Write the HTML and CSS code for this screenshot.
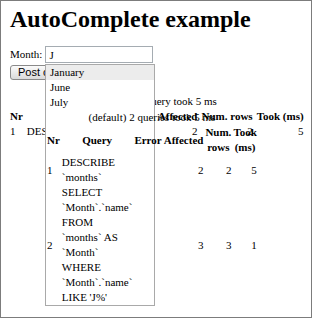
FILE: index.html
```html
<!DOCTYPE html>
<html lang="en">
    <head>
        <meta charset="UTF-8" />
        <meta name="viewport" content="width=device-width, initial-scale=1.0" />
        <title>AutoComplete example</title>
        <link rel="stylesheet" href="styles.css">
    </head>
    <body>
        <div class="page">
            <h1>AutoComplete example</h1>
            <form name="months">
                <div class="field">
                    <label for="month">Month:</label>
                    <input type="text" id="month" name="month" value="J" autocomplete="off" />
                </div>
                <button type="submit" class="post">Post comment</button>
            </form>

            <table class="sql-log page-log">
                <caption>(default) 1 query took 5 ms</caption>
                <thead>
                    <tr>
                        <th>Nr</th>
                        <th>Query</th>
                        <th>Error</th>
                        <th>Affected</th>
                        <th>Num. rows</th>
                        <th>Took (ms)</th>
                    </tr>
                </thead>
                <tbody>
                    <tr>
                        <td>1</td>
                        <td>DESCRIBE `months`</td>
                        <td></td>
                        <td class="num">2</td>
                        <td class="num">2</td>
                        <td class="num">5</td>
                    </tr>
                </tbody>
            </table>

            <!-- autocomplete list, the ajax reply also carries its own sql log -->
            <div class="auto-complete">
                <ul>
                    <li class="selected">January</li>
                    <li>June</li>
                    <li>July</li>
                </ul>
                <table class="sql-log">
                    <caption>(default) 2 queries took 5 ms</caption>
                    <thead>
                        <tr>
                            <th>Nr</th>
                            <th>Query</th>
                            <th>Error</th>
                            <th>Affected</th>
                            <th>Num. rows</th>
                            <th>Took (ms)</th>
                        </tr>
                    </thead>
                    <tbody>
                        <tr>
                            <td>1</td>
                            <td>DESCRIBE `months`</td>
                            <td></td>
                            <td class="num">2</td>
                            <td class="num">2</td>
                            <td class="num">5</td>
                        </tr>
                        <tr>
                            <td>2</td>
                            <td>SELECT `Month`.`name` FROM `months` AS `Month` WHERE `Month`.`name` LIKE 'J%'</td>
                            <td></td>
                            <td class="num">3</td>
                            <td class="num">3</td>
                            <td class="num">1</td>
                        </tr>
                    </tbody>
                </table>
            </div>
        </div>
    </body>
</html>
```

FILE: styles.css
```css
* {
    margin: 0;
    padding: 0;
    box-sizing: border-box;
}
body {
    background-color: #fff;
}
.page {
    position: relative;
    width: 312px;
    height: 318px;
    border: 1px solid #7c7c7c;
    padding: 4px 0 0 9px;
    overflow: hidden;
    font-family: "Liberation Serif", "Times New Roman", serif;
    font-size: 11px;
    line-height: 15px;
    color: #000;
}
h1 {
    font-size: 24px;
    line-height: 28px;
    font-weight: bold;
    margin-bottom: 13px;
}
.field {
    display: flex;
    align-items: center;
    gap: 3px;
    height: 17px;
}
.field input {
    width: 108px;
    height: 17px;
    border: 1px solid #a5acb2;
    padding: 0 3px;
    font-family: inherit;
    font-size: 11px;
    color: #000;
    outline: none;
}
.post {
    display: block;
    margin-top: 2px;
    height: 15px;
    padding: 0 7px;
    font-family: "Liberation Sans", Arial, sans-serif;
    font-size: 11px;
    line-height: 13px;
    color: #000;
    border: 1px solid #8a8a8a;
    border-radius: 3px;
    background: linear-gradient(#fbfbfb, #dadada);
}
.sql-log {
    margin-top: 14px;
    border-collapse: collapse;
    border-spacing: 0;
}
.sql-log caption {
    text-align: center;
}
.sql-log th,
.sql-log td {
    padding: 0 1px;
}
.sql-log th {
    font-weight: bold;
    text-align: center;
}
.sql-log td.num {
    text-align: right;
}
.page-log {
    margin-left: -2px;
}
.page-log th,
.page-log td {
    padding: 0 2px;
    white-space: nowrap;
}
.auto-complete {
    position: absolute;
    left: 44px;
    top: 63px;
    width: 110px;
    border: 1px solid #a9a9a9;
    background-color: #fff;
    z-index: 2;
}
.auto-complete ul {
    list-style: none;
}
.auto-complete li {
    padding-left: 4px;
    white-space: nowrap;
}
.auto-complete li.selected {
    background-color: #ececec;
}
.auto-complete .sql-log {
    margin-top: 0;
}
```
